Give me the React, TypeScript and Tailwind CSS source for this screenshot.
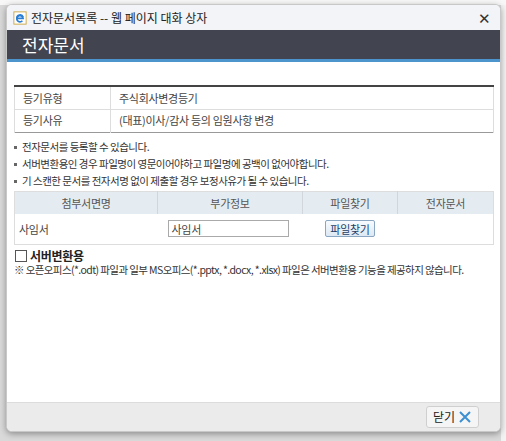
import React from "react";

const font = { fontFamily: '"Noto Sans CJK KR", "Noto Sans", sans-serif' };

export default function App() {
  return (
    <div
      className="w-[506px] h-[441px] bg-[#d9d9d9] relative overflow-hidden"
      style={font}
    >
      {/* page behind the dialog */}
      <div className="absolute inset-x-0 top-0 h-[5px] bg-[#f7f7f7]" />
      <div className="absolute right-0 top-[5px] w-[5px] h-full bg-[#f2f2f2]" />

      <div className="absolute left-[6px] top-[4px] w-[495px] h-[428px] flex flex-col rounded-[6px] overflow-hidden bg-white shadow-[0_2px_6px_rgba(0,0,0,0.35)] border border-[#c8c8c8]">
        {/* title bar */}
        <div className="h-[25px] bg-[#f3f4f7] flex items-center px-[6px] shrink-0">
          <svg width="14" height="14" viewBox="0 0 16 16" className="mr-[4px]">
            <rect x="1" y="1" width="14" height="14" fill="#fff" stroke="#c9a23a" />
            <path
              d="M4 8.5h7.5a3.6 3.6 0 1 0-.8 2.6"
              fill="none"
              stroke="#2a7fd4"
              strokeWidth="2"
            />
            <path d="M4.5 8.5a3.6 3.6 0 0 1 7-1.5" fill="none" stroke="#2a7fd4" strokeWidth="2" />
          </svg>
          <span className="text-[12px] text-[#222] leading-none">
            전자문서목록 -- 웹 페이지 대화 상자
          </span>
          <span className="ml-auto mr-[3px] text-[15px] text-[#333] leading-none">✕</span>
        </div>

        {/* dark header */}
        <div className="h-[29px] bg-[#42444f] flex items-center pl-[15px] shrink-0">
          <span className="text-[17px] text-white leading-none">전자문서</span>
        </div>
        <div className="h-[3px] bg-[#4b94cc] shrink-0" />

        {/* content */}
        <div className="flex-1 px-[7px] pt-[23px] text-[11px] text-[#444] tracking-[-0.3px]">
          <table className="w-[480px] border-collapse border-t-2 border-t-[#444] border-b border-b-[#999]">
            <tbody>
              <tr className="h-[23px] border-b border-[#ddd]">
                <td className="w-[96px] pl-[8px] border-l border-[#ddd]">등기유형</td>
                <td className="pl-[8px] border-l border-r border-[#ddd]">주식회사변경등기</td>
              </tr>
              <tr className="h-[23px]">
                <td className="pl-[8px] border-l border-[#ddd]">등기사유</td>
                <td className="pl-[8px] border-l border-r border-[#ddd]">
                  (대표)이사/감사 등의 임원사항 변경
                </td>
              </tr>
            </tbody>
          </table>

          <ul className="mt-[6px] flex flex-col text-[#333] text-[10.5px] tracking-[-0.5px]">
            <li className="h-[17px] flex items-center">
              <span className="w-[3px] h-[3px] bg-[#666] mr-[5px]" />
              전자문서를 등록할 수 있습니다.
            </li>
            <li className="h-[17px] flex items-center">
              <span className="w-[3px] h-[3px] bg-[#666] mr-[5px]" />
              서버변환용인 경우 파일명이 영문이어야하고 파일명에 공백이 없어야합니다.
            </li>
            <li className="h-[17px] flex items-center">
              <span className="w-[3px] h-[3px] bg-[#666] mr-[5px]" />
              기 스캔한 문서를 전자서명 없이 제출할 경우 보정사유가 될 수 있습니다.
            </li>
          </ul>

          <table className="mt-[1px] w-[480px] border-collapse border border-[#ddd]">
            <thead>
              <tr className="h-[23px] bg-[#e5ecf1] text-[#555]">
                <th className="w-[143px] font-normal border-r border-[#d0d6db]">첨부서면명</th>
                <th className="w-[145px] font-normal border-r border-[#d0d6db]">부가정보</th>
                <th className="w-[95px] font-normal border-r border-[#d0d6db]">파일찾기</th>
                <th className="font-normal">전자문서</th>
              </tr>
            </thead>
            <tbody>
              <tr className="h-[30px]">
                <td className="pl-[4px]">사임서</td>
                <td className="pl-[10px]">
                  <div className="w-[121px] h-[17px] border border-[#aaa] bg-white flex items-center pl-[3px]">
                    사임서
                  </div>
                </td>
                <td className="text-center">
                  <span className="inline-flex items-center px-[4px] h-[17px] border border-[#8aa6c1] rounded-[2px] bg-gradient-to-b from-[#f7fbff] to-[#dde8f3] text-[#1f3f66]">
                    파일찾기
                  </span>
                </td>
                <td />
              </tr>
            </tbody>
          </table>

          <div className="mt-[4px] flex items-center h-[15px] leading-none">
            <span className="w-[12px] h-[12px] border border-[#555] bg-white mr-[3px] ml-[1px]" />
            <span className="text-[12px] font-bold text-[#222]">서버변환용</span>
          </div>
          <div className="h-[14px] flex items-center text-[#333] text-[10.5px] tracking-[-0.6px] whitespace-nowrap leading-none">
            ※ 오픈오피스(*.odt) 파일과 일부 MS오피스(*.pptx, *.docx, *.xlsx) 파일은 서버변환용 기능을 제공하지 않습니다.
          </div>
        </div>

        {/* footer */}
        <div className="h-[29px] bg-[#ebebeb] border-t border-[#dcdcdc] flex items-center justify-end pr-[21px] shrink-0">
          <div className="h-[22px] px-[6px] flex items-center gap-[3px] border border-[#cfcfcf] rounded-[3px] bg-[#f5f5f5]">
            <span className="text-[12px] text-[#222]">닫기</span>
            <svg width="14" height="14" viewBox="0 0 14 14">
              <path d="M2 2L12 12M12 2L2 12" stroke="#3d8fd1" strokeWidth="2" />
            </svg>
          </div>
        </div>
      </div>
    </div>
  );
}
